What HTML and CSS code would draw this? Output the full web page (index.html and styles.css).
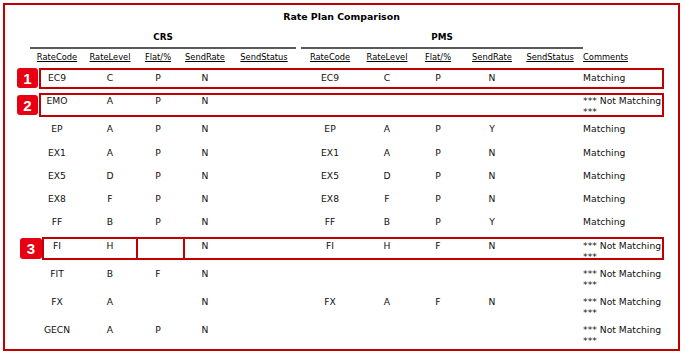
FILE: index.html
```html
<!DOCTYPE html>
<html lang="en">
<head>
<meta charset="utf-8">
<title>Rate Plan Comparison</title>
<link rel="stylesheet" href="styles.css">
</head>
<body>
<div class="frame">
  <div class="title">Rate Plan Comparison</div>
  <table class="grid">
    <colgroup>
      <col class="c1"><col class="c2"><col class="c3"><col class="c4"><col class="c5">
      <col class="c6"><col class="c7"><col class="c8"><col class="c9"><col class="c10">
      <col class="c11">
    </colgroup>
    <thead>
      <tr class="group-row">
        <th colspan="5"><div class="group crs">CRS</div></th>
        <th colspan="5"><div class="group pms">PMS</div></th>
        <th></th>
      </tr>
      <tr class="head-row">
        <th>RateCode</th><th>RateLevel</th><th>Flat/%</th><th>SendRate</th><th>SendStatus</th>
        <th>RateCode</th><th>RateLevel</th><th>Flat/%</th><th>SendRate</th><th>SendStatus</th>
        <th class="left">Comments</th>
      </tr>
    </thead>
    <tbody>
      <tr><td>EC9</td><td>C</td><td>P</td><td>N</td><td></td><td>EC9</td><td>C</td><td>P</td><td>N</td><td></td><td class="cm">Matching</td></tr>
      <tr><td>EMO</td><td>A</td><td>P</td><td>N</td><td></td><td></td><td></td><td></td><td></td><td></td><td class="cm">*** Not Matching ***</td></tr>
      <tr><td>EP</td><td>A</td><td>P</td><td>N</td><td></td><td>EP</td><td>A</td><td>P</td><td>Y</td><td></td><td class="cm">Matching</td></tr>
      <tr><td>EX1</td><td>A</td><td>P</td><td>N</td><td></td><td>EX1</td><td>A</td><td>P</td><td>N</td><td></td><td class="cm">Matching</td></tr>
      <tr><td>EX5</td><td>D</td><td>P</td><td>N</td><td></td><td>EX5</td><td>D</td><td>P</td><td>N</td><td></td><td class="cm">Matching</td></tr>
      <tr><td>EX8</td><td>F</td><td>P</td><td>N</td><td></td><td>EX8</td><td>F</td><td>P</td><td>N</td><td></td><td class="cm">Matching</td></tr>
      <tr><td>FF</td><td>B</td><td>P</td><td>N</td><td></td><td>FF</td><td>B</td><td>P</td><td>Y</td><td></td><td class="cm">Matching</td></tr>
      <tr><td>FI</td><td>H</td><td></td><td>N</td><td></td><td>FI</td><td>H</td><td>F</td><td>N</td><td></td><td class="cm">*** Not Matching ***</td></tr>
      <tr><td>FIT</td><td>B</td><td>F</td><td>N</td><td></td><td></td><td></td><td></td><td></td><td></td><td class="cm">*** Not Matching ***</td></tr>
      <tr><td>FX</td><td>A</td><td></td><td>N</td><td></td><td>FX</td><td>A</td><td>F</td><td>N</td><td></td><td class="cm">*** Not Matching ***</td></tr>
      <tr><td>GECN</td><td>A</td><td>P</td><td>N</td><td></td><td></td><td></td><td></td><td></td><td></td><td class="cm">*** Not Matching ***</td></tr>
    </tbody>
  </table>

  <div class="mark box box-1"></div>
  <div class="mark badge badge-1">1</div>
  <div class="mark box box-2"></div>
  <div class="mark badge badge-2">2</div>
  <div class="mark box3">
    <div class="seg seg-a"></div>
    <div class="seg seg-b"></div>
    <div class="seg seg-c"></div>
  </div>
  <div class="mark badge badge-3">3</div>
</div>
</body>
</html>
```
FILE: styles.css
```css
html, body {
  margin: 0;
  padding: 0;
  background: #ffffff;
}

.frame {
  position: relative;
  box-sizing: border-box;
  margin: 3px 0 0 3px;
  width: 677px;
  height: 348px;
  border: 2px solid #c00000;
  font-family: "DejaVu Sans", Verdana, sans-serif;
  color: #111111;
}

.title {
  padding-top: 5px;
  height: 14px;
  line-height: 14px;
  text-align: center;
  font-weight: bold;
  font-size: 9.4px;
  color: #000000;
}

.grid {
  margin-left: 25px;
  border-collapse: collapse;
  table-layout: fixed;
  width: 638px;
}

.c1 { width: 54px; }
.c2 { width: 52px; }
.c3 { width: 44px; }
.c4 { width: 50px; }
.c5 { width: 68px; }
.c6 { width: 64px; }
.c7 { width: 50px; }
.c8 { width: 52px; }
.c9 { width: 56px; }
.c10 { width: 60px; }
.c11 { width: 88px; }

.grid th,
.grid td {
  padding: 0;
  text-align: center;
  font-weight: normal;
}

.group-row th {
  padding-top: 7px;
}

.group {
  line-height: 12px;
  font-size: 8.8px;
  font-weight: bold;
  color: #000000;
  padding-bottom: 4px;
  border-bottom: 2px solid #5a5a5a;
}

.group.crs {
  margin-right: 2px;
}

.group.pms {
  margin-left: 3px;
  margin-right: -3px;
}

.head-row th {
  padding: 3px 0 3px;
  line-height: 11px;
  font-size: 8.3px;
  text-decoration: underline;
  color: #000000;
}

.head-row th.left {
  text-align: left;
  padding-left: 3px;
}

.grid tbody tr {
  height: 23.25px;
}

.grid tbody td {
  vertical-align: top;
  padding-top: 6px;
  line-height: 11px;
  font-size: 9.2px;
}

.grid tbody td.cm {
  text-align: left;
  padding-left: 3px;
}

/* annotation overlays */
.mark {
  position: absolute;
  box-sizing: border-box;
}

.box {
  border: 2px solid #c00000;
}

.box-1 { left: 34px; top: 63px; width: 625px; height: 21px; }
.box-2 { left: 34px; top: 88px; width: 625px; height: 24px; }

.box3 {
  left: 37px;
  top: 232px;
  width: 622px;
  height: 23px;
  display: flex;
  border: 2px solid #c00000;
}

.seg { height: 100%; }
.seg-a { width: 92px; border-right: 2px solid #c00000; }
.seg-b { width: 45px; border-right: 2px solid #c00000; }
.seg-c { flex: 1; }

.badge {
  display: flex;
  align-items: center;
  justify-content: center;
  background: #e60012;
  color: #ffffff;
  border-radius: 3px;
  font-family: "Liberation Sans", Arial, sans-serif;
  font-weight: bold;
  font-size: 15px;
}

.badge-1 { left: 12px; top: 63px; width: 21px; height: 20px; }
.badge-2 { left: 12px; top: 90px; width: 21px; height: 20px; }
.badge-3 { left: 15px; top: 233px; width: 22px; height: 21px; }
```
